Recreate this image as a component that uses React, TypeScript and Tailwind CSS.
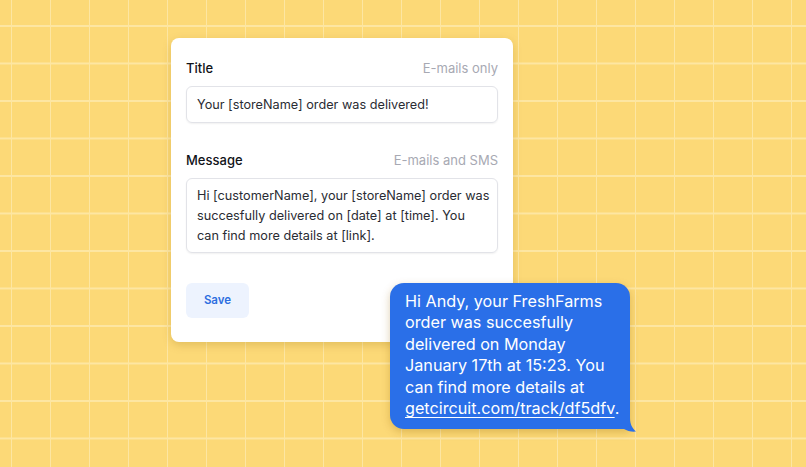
export default function App() {
  return (
    <div className="relative w-[806px] h-[467px] overflow-hidden bg-[#fcd977] bg-[linear-gradient(to_right,#fde6a2_1.5px,transparent_1.5px),linear-gradient(to_bottom,#fde6a2_1.5px,transparent_1.5px)] bg-[size:39px_37.5px] bg-[position:11px_25px] font-['Inter','Liberation_Sans',sans-serif]">
      <div className="ml-[171px] mt-[38px] w-[342px] h-[304px] bg-white rounded-[8px] shadow-[0_3px_8px_rgba(150,110,20,0.25)] px-[15px] pt-[22px] pb-[23px]">
        <div className="flex items-center justify-between h-[18px] text-[13px]">
          <span className="font-medium text-[#111318]">Title</span>
          <span className="text-[#a7a9b3]">E-mails only</span>
        </div>
        <div className="mt-[8px] h-[37px] flex items-center px-[10px] border border-[#e2e3e8] rounded-[6px] shadow-[0_1px_2px_rgba(0,0,0,0.06)] text-[12.7px] text-[#2a2c33]">
          Your [storeName] order was delivered!
        </div>

        <div className="mt-[29px] flex items-center justify-between h-[18px] text-[13px]">
          <span className="font-medium text-[#111318]">Message</span>
          <span className="text-[#a7a9b3]">E-mails and SMS</span>
        </div>
        <div className="mt-[8px] h-[75px] pl-[10px] pr-[4px] py-[7px] border border-[#e2e3e8] rounded-[6px] shadow-[0_1px_2px_rgba(0,0,0,0.06)] text-[12.7px] leading-[20px] text-[#2a2c33]">
          Hi [customerName], your [storeName] order was
          <br />
          succesfully delivered on [date] at [time]. You
          <br />
          can find more details at [link].
        </div>

        <button className="mt-[30px] w-[63px] h-[35px] rounded-[6px] bg-[#edf3fe] text-[11.5px] font-semibold text-[#2d6ee0]">
          Save
        </button>
      </div>

      <div className="absolute left-[390px] top-[283px] w-[240px] h-[146px] bg-[#2a6fe8] rounded-[14px] rounded-br-none shadow-[0_3px_8px_rgba(150,100,0,0.3)] pl-[15px] pr-[6px] pt-[8px] text-[16.2px] leading-[21.4px] text-white">
        Hi Andy, your FreshFarms order was succesfully delivered on Monday January 17th at 15:23. You can find more details at{' '}
        <span className="underline underline-offset-[3px] decoration-[1px]">getcircuit.com/track/df5dfv</span>.
        <svg className="absolute right-[-6px] bottom-[-3px]" width="12" height="14" viewBox="0 0 12 14">
          <path d="M0 0 L6 0 C6 6 8 10 12 13.5 C8 14 3 13 0 11 Z" fill="#2a6fe8" />
        </svg>
      </div>
    </div>
  );
}
